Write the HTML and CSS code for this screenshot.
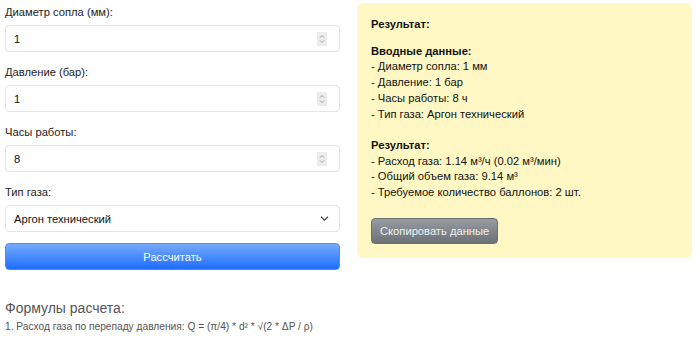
FILE: index.html
```html
<!DOCTYPE html>
<html lang="ru">

<head>
    <meta charset="UTF-8">
    <meta name="viewport" content="width=device-width, initial-scale=1.0">
    <title>Расчет расхода газа</title>
    <link rel="stylesheet" href="styles.css">
</head>

<body>
    <div class="container">
        <div class="calc-form">
            <div class="form-group">
                <label for="diameter">Диаметр сопла (мм):</label>
                <input type="number" id="diameter" value="1">
            </div>
            <div class="form-group">
                <label for="pressure">Давление (бар):</label>
                <input type="number" id="pressure" value="1">
            </div>
            <div class="form-group">
                <label for="hours">Часы работы:</label>
                <input type="number" id="hours" value="8">
            </div>
            <div class="form-group">
                <label for="gasType">Тип газа:</label>
                <select id="gasType">
                    <option>Аргон технический</option>
                    <option>Азот</option>
                    <option>Углекислота</option>
                </select>
            </div>
            <button class="calcButton">Рассчитать</button>

            <div class="formulas">
                <h3>Формулы расчета:</h3>
                <p>1. Расход газа по перепаду давления: Q = (π/4) * d² * √(2 * ΔP / ρ)</p>
            </div>
        </div>

        <div class="result">
            <p><strong>Результат:</strong></p>
            <p><strong>Вводные данные:</strong><br>
                - Диаметр сопла: 1 мм<br>
                - Давление: 1 бар<br>
                - Часы работы: 8 ч<br>
                - Тип газа: Аргон технический</p>
            <p><strong>Результат:</strong><br>
                - Расход газа: 1.14 м³/ч (0.02 м³/мин)<br>
                - Общий объем газа: 9.14 м³<br>
                - Требуемое количество баллонов: 2 шт.</p>
            <button class="copyButton">Скопировать данные</button>
        </div>
    </div>
</body>

</html>
```

FILE: styles.css
```css
body {
    margin: 0;
    font-family: 'Liberation Sans', Arial, sans-serif;
    font-size: 11.2px;
    color: #111;
    background-color: #fff;
}

.container {
    display: flex;
    align-items: flex-start;
    gap: 17px;
    padding: 3px 8px 0 5px;
}

.calc-form {
    width: 335px;
    padding-top: 1px;
}

.form-group {
    display: flex;
    flex-direction: column;
    gap: 5px;
    margin-bottom: 12px;
}

.form-group label {
    line-height: 16px;
    color: #222;
}

.form-group input,
.form-group select {
    box-sizing: border-box;
    height: 27px;
    width: 100%;
    padding: 0 8px;
    border: 1px solid #e4e4e4;
    border-radius: 4px;
    font-family: inherit;
    font-size: 11.2px;
    color: #111;
    background-color: #fff;
    outline: none;
}

/* spin buttons only show on hover, so draw them */
.form-group input[type="number"] {
    appearance: textfield;
    background-image: url("data:image/svg+xml,%3Csvg xmlns='http://www.w3.org/2000/svg' width='10' height='14'%3E%3Crect width='10' height='14' fill='%23ececec'/%3E%3Cpath d='M3 5.5L5 3.5L7 5.5M3 8.5L5 10.5L7 8.5' fill='none' stroke='%23999' stroke-width='0.9'/%3E%3C/svg%3E");
    background-repeat: no-repeat;
    background-position: right 12px center;
}

.form-group input::-webkit-inner-spin-button,
.form-group input::-webkit-outer-spin-button {
    -webkit-appearance: none;
    margin: 0;
}

.form-group select {
    appearance: none;
    background-image: url("data:image/svg+xml,%3Csvg xmlns='http://www.w3.org/2000/svg' width='9' height='5'%3E%3Cpath d='M1 0.8L4.5 4.2L8 0.8' fill='none' stroke='%23444' stroke-width='1.2'/%3E%3C/svg%3E");
    background-repeat: no-repeat;
    background-position: right 10px center;
}

.form-group:nth-child(4) {
    margin-bottom: 11px;
}

.calcButton {
    box-sizing: border-box;
    width: 100%;
    height: 27px;
    border: 1px solid #4a8ef5;
    border-radius: 4px;
    background: linear-gradient(#76abfb, #1c6dff);
    color: #fff;
    font-family: inherit;
    font-size: 11.2px;
    cursor: pointer;
}

.formulas h3 {
    margin: 30px 0 4px;
    font-size: 14px;
    line-height: 17px;
    font-weight: normal;
    color: #555;
}

.formulas p {
    margin: 0;
    font-size: 10.2px;
    line-height: 12px;
    color: #555;
}

.result {
    width: 335px;
    box-sizing: border-box;
    padding: 14px;
    background-color: #fff8c4;
    border-radius: 6px;
    line-height: 15.7px;
}

.result p {
    margin: 0 0 15.7px;
}

.result p:first-child {
    margin-bottom: 11px;
}

.copyButton {
    box-sizing: border-box;
    height: 26px;
    padding: 0 8px;
    margin-top: 2px;
    border: 1px solid #6b7075;
    border-radius: 4px;
    background: linear-gradient(#979ca1, #6b7177);
    color: #eef0f2;
    font-family: inherit;
    font-size: 11.2px;
    cursor: pointer;
}
```
